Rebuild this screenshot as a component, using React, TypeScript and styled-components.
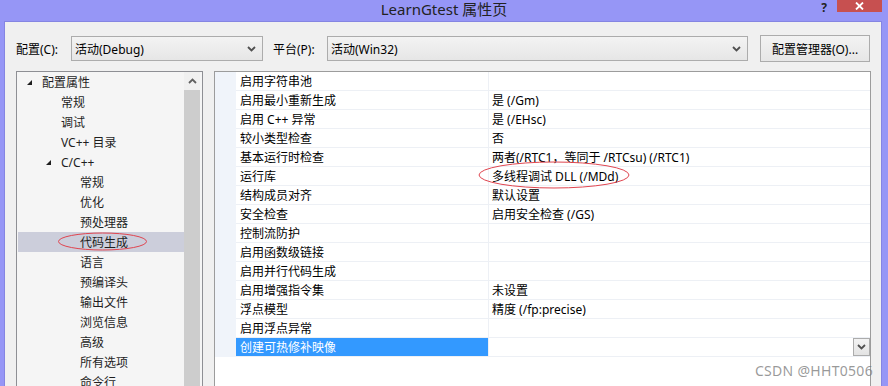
import React from "react";
import styled, { createGlobalStyle } from "styled-components";

const GlobalStyle = createGlobalStyle`
  html, body {
    margin: 0;
    padding: 0;
    background: #9696f6;
  }
  body {
    font-family: "Noto Sans", "Noto Sans CJK SC", sans-serif;
    font-size: 12px;
    color: #1e1e1e;
  }
`;

const Window = styled.div`
  position: relative;
  width: 888px;
  height: 386px;
  overflow: hidden;
  background: #9696f6;
  display: flex;
  flex-direction: column;
`;

const TitleBar = styled.div`
  flex: none;
  height: 21px;
  display: grid;
  grid-template-columns: 1fr auto 1fr;
  align-items: start;
`;

const Title = styled.div`
  grid-column: 2;
  font-size: 15px;
  line-height: 18px;
  color: #222;
`;

const TitleControls = styled.div`
  grid-column: 3;
  justify-self: end;
  display: flex;
  align-items: flex-start;
  margin-right: 6px;
`;

const HelpMark = styled.span`
  font-size: 12px;
  font-weight: bold;
  line-height: 14px;
  padding-top: 1px;
  color: #222;
  margin-right: 10px;
`;

const CloseButton = styled.div`
  width: 45px;
  height: 12px;
  background: #c75050;
  display: flex;
  align-items: center;
  justify-content: center;
`;

const Content = styled.div`
  flex: 1;
  margin: 0 6px 0 4px;
  border: 1px solid #8585e2;
  border-bottom: none;
  background: #f0f0f0;
  padding: 13px 10px 0 11px;
  display: flex;
  flex-direction: column;
`;

const TopRow = styled.div`
  display: flex;
  align-items: center;
  height: 27px;
  padding-right: 1px;
`;

const FieldLabel = styled.span<{ $w: number; $ml?: number }>`
  width: ${(p) => p.$w}px;
  margin-left: ${(p) => p.$ml ?? 0}px;
  flex: none;
  color: #000;
`;

const Combo = styled.div<{ $w?: number }>`
  box-sizing: border-box;
  height: 25px;
  ${(p) => (p.$w ? `width: ${p.$w}px; flex: none;` : "flex: 1;")}
  border: 1px solid #acacac;
  background: linear-gradient(#f3f3f3, #e6e6e6);
  display: flex;
  align-items: center;
  justify-content: space-between;
  padding: 0 6px 0 3px;
  color: #000;
`;

const Button = styled.div`
  box-sizing: border-box;
  width: 110px;
  height: 27px;
  margin-left: 12px;
  border: 1px solid #acacac;
  background: linear-gradient(#f3f3f3, #e6e6e6);
  display: flex;
  align-items: center;
  justify-content: center;
  color: #000;
`;

const PanelsRow = styled.div`
  flex: none;
  height: 340px;
  margin-top: 9px;
  display: flex;
  gap: 11px;
`;

const TreePanel = styled.div`
  box-sizing: border-box;
  width: 187px;
  flex: none;
  border: 1px solid #8e8f94;
  background: #f5f5f5;
  display: flex;
  padding-left: 1px;
`;

const TreeList = styled.div`
  width: 166px;
  flex: none;
`;

const TreeItem = styled.div<{ $level: number; $selected?: boolean }>`
  height: 20px;
  display: flex;
  align-items: center;
  padding-left: ${(p) => 9 + 19 * p.$level}px;
  background: ${(p) => (p.$selected ? "#cccedb" : "transparent")};
`;

const Expander = styled.span`
  width: 15px;
  flex: none;
  display: flex;
  align-items: center;
`;

const ScrollBar = styled.div`
  width: 16px;
  flex: none;
  margin-right: 2px;
  background: #f0f0f0;
  display: flex;
  flex-direction: column;
`;

const ScrollUp = styled.div`
  height: 18px;
  display: flex;
  align-items: center;
  justify-content: center;
`;

const ScrollThumb = styled.div`
  flex: 1;
  background: #cdcdcd;
`;

const GridPanel = styled.div`
  box-sizing: border-box;
  flex: 1;
  border: 1px solid #9c9c9c;
  background: #fff;
`;

const PropRow = styled.div`
  display: grid;
  grid-template-columns: 21px 253px 1fr;
  height: 19px;
`;

const Gutter = styled.div`
  background: #f0f4fa;
`;

const NameCell = styled.div<{ $selected?: boolean }>`
  box-sizing: border-box;
  padding-left: 4px;
  border-right: 1px solid #edf0f5;
  border-bottom: 1px solid #edf0f5;
  display: flex;
  align-items: center;
  white-space: nowrap;
  color: ${(p) => (p.$selected ? "#fff" : "#000")};
  background: ${(p) => (p.$selected ? "#3399ff" : "transparent")};
`;

const ValueCell = styled.div`
  box-sizing: border-box;
  padding-left: 3px;
  border-bottom: 1px solid #edf0f5;
  display: flex;
  align-items: center;
  justify-content: space-between;
  white-space: nowrap;
  color: #000;
`;

const DropButton = styled.div`
  box-sizing: border-box;
  width: 17px;
  height: 18px;
  border: 1px solid #acacac;
  background: linear-gradient(#f3f3f3, #e3e3e3);
  display: flex;
  align-items: center;
  justify-content: center;
`;

const Annotations = styled.svg`
  position: absolute;
  left: 0;
  top: 0;
  pointer-events: none;
`;

const Watermark = styled.div`
  position: absolute;
  right: 15px;
  top: 361px;
  font-size: 14px;
  color: rgba(120, 120, 120, 0.75);
  letter-spacing: 0.3px;
`;

const Chevron = () => (
  <svg width="9" height="6" viewBox="0 0 9 6">
    <polyline points="1,1 4.5,4.5 8,1" fill="none" stroke="#505050" strokeWidth="1.8" />
  </svg>
);

const ChevronUp = () => (
  <svg width="9" height="6" viewBox="0 0 9 6">
    <polyline points="1,5 4.5,1.5 8,5" fill="none" stroke="#606060" strokeWidth="1.8" />
  </svg>
);

const ExpandedArrow = () => (
  <svg width="5" height="5" viewBox="0 0 5 5">
    <polygon points="5,0 5,5 0,5" fill="#1e1e1e" />
  </svg>
);

const treeItems: { label: string; level: number; expanded?: boolean; selected?: boolean }[] = [
  { label: "配置属性", level: 0, expanded: true },
  { label: "常规", level: 1 },
  { label: "调试", level: 1 },
  { label: "VC++ 目录", level: 1 },
  { label: "C/C++", level: 1, expanded: true },
  { label: "常规", level: 2 },
  { label: "优化", level: 2 },
  { label: "预处理器", level: 2 },
  { label: "代码生成", level: 2, selected: true },
  { label: "语言", level: 2 },
  { label: "预编译头", level: 2 },
  { label: "输出文件", level: 2 },
  { label: "浏览信息", level: 2 },
  { label: "高级", level: 2 },
  { label: "所有选项", level: 2 },
  { label: "命令行", level: 2 },
];

const props: [string, string][] = [
  ["启用字符串池", ""],
  ["启用最小重新生成", "是 (/Gm)"],
  ["启用 C++ 异常", "是 (/EHsc)"],
  ["较小类型检查", "否"],
  ["基本运行时检查", "两者(/RTC1，等同于 /RTCsu) (/RTC1)"],
  ["运行库", "多线程调试 DLL (/MDd)"],
  ["结构成员对齐", "默认设置"],
  ["安全检查", "启用安全检查 (/GS)"],
  ["控制流防护", ""],
  ["启用函数级链接", ""],
  ["启用并行代码生成", ""],
  ["启用增强指令集", "未设置"],
  ["浮点模型", "精度 (/fp:precise)"],
  ["启用浮点异常", ""],
  ["创建可热修补映像", ""],
];

export default function App() {
  return (
    <Window>
      <GlobalStyle />
      <TitleBar>
        <Title>LearnGtest 属性页</Title>
        <TitleControls>
          <HelpMark>?</HelpMark>
          <CloseButton>
            <svg width="9" height="8" viewBox="0 0 9 8">
              <path d="M1 0.5 L8 7.5 M8 0.5 L1 7.5" stroke="#fff" strokeWidth="1.8" />
            </svg>
          </CloseButton>
        </TitleControls>
      </TitleBar>
      <Content>
        <TopRow>
          <FieldLabel $w={55}>配置(C):</FieldLabel>
          <Combo $w={192}>
            <span>活动(Debug)</span>
            <Chevron />
          </Combo>
          <FieldLabel $w={54} $ml={10}>平台(P):</FieldLabel>
          <Combo>
            <span>活动(Win32)</span>
            <Chevron />
          </Combo>
          <Button>配置管理器(O)...</Button>
        </TopRow>
        <PanelsRow>
          <TreePanel>
            <TreeList>
              {treeItems.map((item, i) => (
                <TreeItem key={i} $level={item.level} $selected={item.selected}>
                  <Expander>{item.expanded && <ExpandedArrow />}</Expander>
                  <span>{item.label}</span>
                </TreeItem>
              ))}
            </TreeList>
            <ScrollBar>
              <ScrollUp>
                <ChevronUp />
              </ScrollUp>
              <ScrollThumb />
            </ScrollBar>
          </TreePanel>
          <GridPanel>
            {props.map(([name, value], i) => {
              const selected = i === props.length - 1;
              return (
                <PropRow key={i}>
                  <Gutter />
                  <NameCell $selected={selected}>{name}</NameCell>
                  <ValueCell>
                    <span>{value}</span>
                    {selected && (
                      <DropButton>
                        <Chevron />
                      </DropButton>
                    )}
                  </ValueCell>
                </PropRow>
              );
            })}
          </GridPanel>
        </PanelsRow>
      </Content>
      <Annotations width="888" height="386">
        <ellipse cx="102.5" cy="241.5" rx="44" ry="8.5" fill="none" stroke="#e04550" strokeWidth="1" />
        <ellipse cx="554" cy="175" rx="75" ry="13" fill="none" stroke="#e04550" strokeWidth="1" />
      </Annotations>
      <Watermark>CSDN @HHT0506</Watermark>
    </Window>
  );
}
